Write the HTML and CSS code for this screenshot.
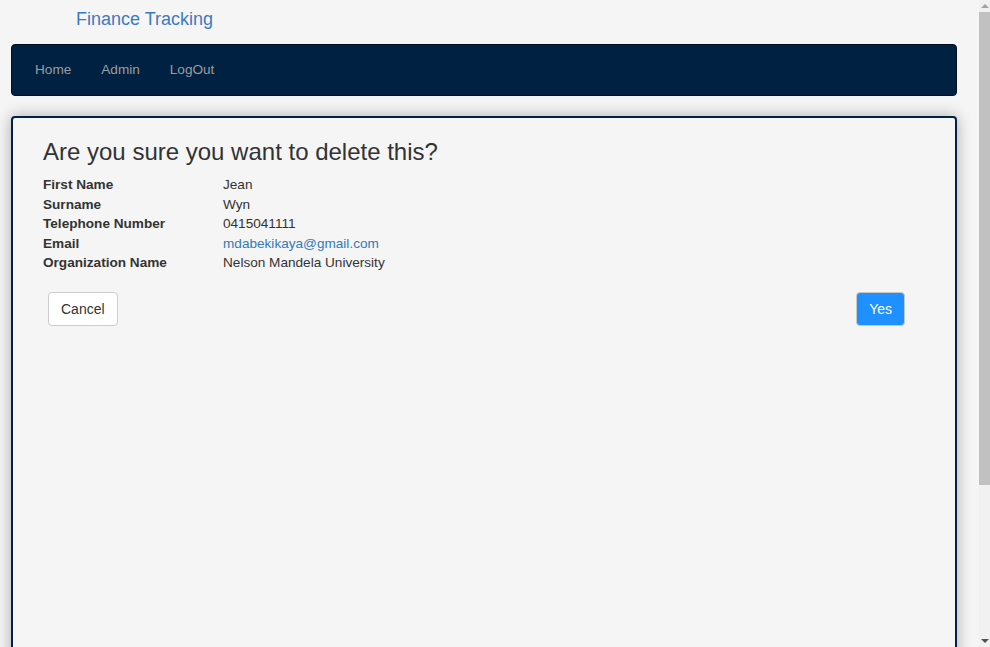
FILE: index.html
```html
<!DOCTYPE html>
<html>
<head>
<meta charset="utf-8">
<link rel="stylesheet" href="styles.css">
<title>Delete</title>
</head>
<body>
<div class="page">
  <header class="top">
    <a class="brand" href="#">Finance Tracking</a>
  </header>
  <nav class="navbar">
    <ul class="nav">
      <li><a href="#">Home</a></li>
      <li><a href="#">Admin</a></li>
      <li><a href="#">LogOut</a></li>
    </ul>
  </nav>
  <main class="panel">
    <h3 class="title">Are you sure you want to delete this?</h3>
    <dl class="details">
      <dt>First Name</dt><dd>Jean</dd>
      <dt>Surname</dt><dd>Wyn</dd>
      <dt>Telephone Number</dt><dd>0415041111</dd>
      <dt>Email</dt><dd><a href="#">mdabekikaya@gmail.com</a></dd>
      <dt>Organization Name</dt><dd>Nelson Mandela University</dd>
    </dl>
    <div class="actions">
      <button class="btn btn-default">Cancel</button>
      <button class="btn btn-primary">Yes</button>
    </div>
  </main>
</div>
<div class="scrollbar" aria-hidden="true">
  <div class="sb-btn"><span class="arrow-up"></span></div>
  <div class="sb-track"><div class="sb-thumb"></div></div>
  <div class="sb-btn"><span class="arrow-down"></span></div>
</div>
</body>
</html>
```
FILE: styles.css
```css
* { box-sizing: border-box; }
html, body {
  margin: 0;
  height: 100%;
  overflow: hidden;
}
body {
  background: #f5f5f5;
  font-family: "Liberation Sans", Arial, sans-serif;
  font-size: 13.6px;
  line-height: 20px;
  color: #333;
}
.page {
  height: 100vh;
  overflow: hidden;
  padding: 0 33px 16px 11px;
}
.scrollbar {
  position: fixed;
  top: 0;
  right: 0;
  width: 11px;
  height: 100vh;
  background: #f1f1f1;
  display: flex;
  flex-direction: column;
}
.sb-btn {
  height: 12px;
  display: flex;
  align-items: center;
  justify-content: center;
  padding-left: 1px;
}
.sb-track {
  flex: 1;
}
.sb-thumb {
  height: 473px;
  background: #c1c1c1;
}
.arrow-up {
  width: 0;
  height: 0;
  border-left: 4px solid transparent;
  border-right: 4px solid transparent;
  border-bottom: 4px solid #a3a3a3;
}
.arrow-down {
  width: 0;
  height: 0;
  border-left: 4px solid transparent;
  border-right: 4px solid transparent;
  border-top: 4px solid #505050;
}
.top {
  height: 44px;
  padding-left: 65px;
}
.brand {
  display: inline-block;
  font-size: 18px;
  line-height: 20px;
  padding: 9px 0 15px;
  color: #3c7abf;
  text-decoration: none;
}
.navbar {
  height: 52px;
  background: #002142;
  border: 1px solid #000d1a;
  border-radius: 4px;
  display: flex;
  align-items: center;
  padding-left: 8px;
}
.nav {
  list-style: none;
  margin: 0;
  padding: 0;
  display: flex;
}
.nav a {
  display: block;
  padding: 15px;
  color: #9d9d9d;
  text-decoration: none;
  line-height: 18px;
}
.panel {
  margin-top: 20px;
  min-height: 720px;
  border: 2px solid #002142;
  border-radius: 4px;
  box-shadow: 0 0 15px rgba(0,0,0,0.3);
  padding: 21px 30px 20px 30px;
}
.title {
  font-size: 24px;
  font-weight: 500;
  line-height: 26.4px;
  margin: 0 0 10px;
  color: #333;
}
.details {
  display: grid;
  grid-template-columns: 180px 1fr;
  margin: 0 0 19px;
  line-height: 19.5px;
}
.details dt {
  font-weight: bold;
  width: 160px;
}
.details dd { margin: 0; }
.details a { color: #337ab7; text-decoration: none; }
.actions {
  display: flex;
  justify-content: space-between;
  padding: 0 20px 0 5px;
}
.btn {
  font-family: inherit;
  font-size: 14px;
  line-height: 20px;
  padding: 6px 12px;
  border-radius: 4px;
  border: 1px solid #ccc;
  cursor: pointer;
}
.btn-default { background: #fff; color: #333; }
.btn-primary { background: #1e90ff; color: #fff; border-color: #c8c8c8; }
```
